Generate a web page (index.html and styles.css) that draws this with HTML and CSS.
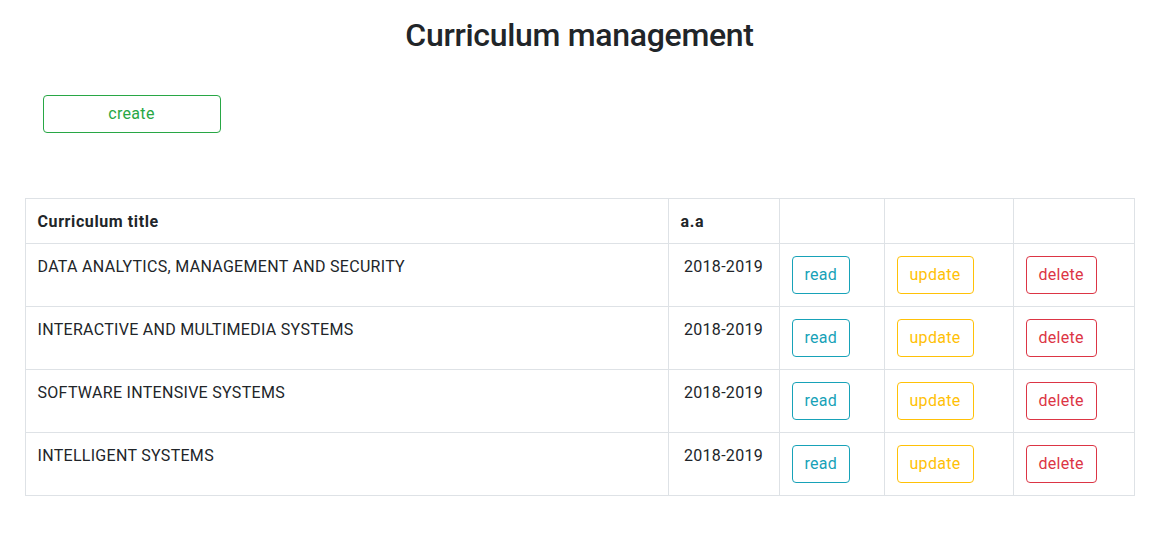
FILE: index.html
```html
<!DOCTYPE html>
<html>
<head>
<meta charset="utf-8">
<link rel="stylesheet" href="styles.css">
</head>
<body>
<div class="container">
  <h2 class="title">Curriculum management</h2>
  <div class="toolbar">
    <button class="btn btn-success btn-create">create</button>
  </div>
  <table class="table">
    <thead>
      <tr>
        <th class="col-title">Curriculum title</th>
        <th class="col-aa">a.a</th>
        <th class="col-read"></th>
        <th class="col-update"></th>
        <th class="col-delete"></th>
      </tr>
    </thead>
    <tbody>
      <tr>
        <td class="name">DATA ANALYTICS, MANAGEMENT AND SECURITY</td>
        <td class="year">2018-2019</td>
        <td><button class="btn btn-info">read</button></td>
        <td><button class="btn btn-warning">update</button></td>
        <td><button class="btn btn-danger">delete</button></td>
      </tr>
      <tr>
        <td class="name">INTERACTIVE AND MULTIMEDIA SYSTEMS</td>
        <td class="year">2018-2019</td>
        <td><button class="btn btn-info">read</button></td>
        <td><button class="btn btn-warning">update</button></td>
        <td><button class="btn btn-danger">delete</button></td>
      </tr>
      <tr>
        <td class="name">SOFTWARE INTENSIVE SYSTEMS</td>
        <td class="year">2018-2019</td>
        <td><button class="btn btn-info">read</button></td>
        <td><button class="btn btn-warning">update</button></td>
        <td><button class="btn btn-danger">delete</button></td>
      </tr>
      <tr>
        <td class="name">INTELLIGENT SYSTEMS</td>
        <td class="year">2018-2019</td>
        <td><button class="btn btn-info">read</button></td>
        <td><button class="btn btn-warning">update</button></td>
        <td><button class="btn btn-danger">delete</button></td>
      </tr>
    </tbody>
  </table>
</div>
</body>
</html>
```

FILE: styles.css
```css
* { box-sizing: border-box; }
html, body { margin: 0; padding: 0; background: #fff; }
body {
  font-family: Roboto, "Liberation Sans", Arial, sans-serif;
  font-size: 16px;
  line-height: 1.5;
  color: #212529;
  letter-spacing: 0.3px;
}
.container {
  max-width: 1140px;
  margin: 0 auto;
  padding: 0 15px;
}
.title {
  margin: 16px 0 0;
  font-size: 32px;
  font-weight: 500;
  line-height: 1.2;
  letter-spacing: -0.3px;
  text-align: center;
}
.toolbar {
  padding: 0 18px;
  margin-top: 41px;
  margin-bottom: 65px;
}
.btn {
  display: inline-block;
  font-family: inherit;
  font-size: 16px;
  line-height: 24px;
  letter-spacing: 0.3px;
  padding: 6px 12px;
  border: 1px solid;
  border-radius: 4px;
  background: transparent;
  cursor: pointer;
  text-align: center;
}
.btn-create { width: 178px; height: 38px; }
.btn-success { color: #28a745; border-color: #28a745; }
.btn-info { color: #17a2b8; border-color: #17a2b8; }
.btn-warning { color: #ffc107; border-color: #ffc107; }
.btn-danger { color: #dc3545; border-color: #dc3545; }
.table {
  width: 100%;
  border-collapse: collapse;
}
.table th, .table td {
  border: 1px solid #dee2e6;
  padding: 12px;
  text-align: left;
  vertical-align: top;
}
.table th {
  font-weight: 700;
  line-height: 20px;
  letter-spacing: 0.6px;
  padding-top: 13px;
  padding-bottom: 11px;
}
.table td.name, .table td.year { padding-top: 11px; padding-bottom: 13px; }
.table td.year { text-align: center; }
.col-title { width: 643px; }
.col-aa { width: 111px; }
.col-read { width: 105px; }
.col-update { width: 129px; }
```
